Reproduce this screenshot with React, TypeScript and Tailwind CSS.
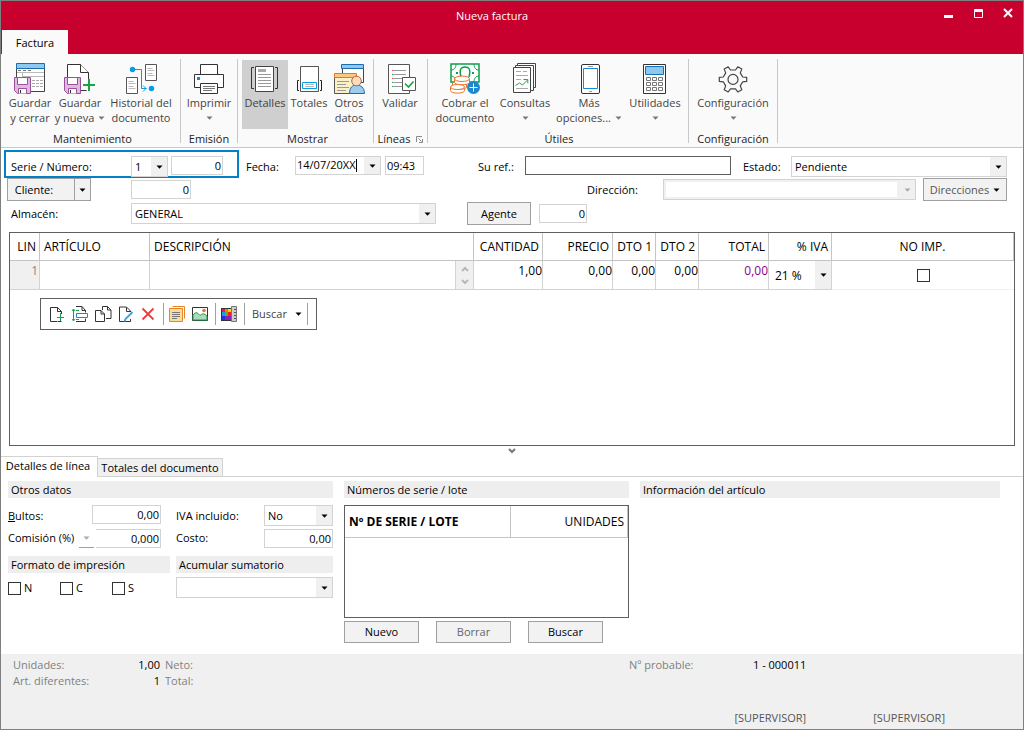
import React from "react";

type Kids = { children?: React.ReactNode };

function Icon({ children }: Kids) {
  return (
    <svg className="h-8 w-8 shrink-0" viewBox="0 0 32 32" fill="none" aria-hidden="true">
      {children}
    </svg>
  );
}

function Floppy() {
  return (
    <g stroke="#9c4f9c">
      <path d="M0.5 15.5h16v16h-13l-3-3z" fill="#dfbadf" />
      <path d="M3.5 15.5h10v7h-10z" fill="#fff" />
      <path d="M4.5 31.5v-5h8v5" fill="#fff" />
      <path d="M6.5 28v3" stroke="#333" />
    </g>
  );
}

function SaveCloseIcon() {
  return (
    <Icon>
      <path d="M2.5 6.5h28v23h-28z" fill="#fff" stroke="#444" />
      <path d="M2.5 1.5h28v5h-28z" fill="#8cc8f0" stroke="#1c6dae" />
      <path d="M4 8.5h3M9 8.5h3M14 8.5h3" stroke="#777" />
      <path d="M3 10.5h27M8.5 11v4M8 14.5h22" stroke="#bbb" />
      <path d="M18 18.5h11M18 21.5h11M18 24.5h11" stroke="#aaa" strokeDasharray="3 1" />
      <Floppy />
    </Icon>
  );
}

function SaveNewIcon() {
  return (
    <Icon>
      <path d="M3.5 15V2.5h13l8 8v18h-8" fill="#fff" stroke="#333" />
      <path d="M16.5 2.5v8h8" fill="#fff" stroke="#333" />
      <Floppy />
      <path d="M25 18v12M19 24h12" stroke="#fafafa" strokeWidth="5" />
      <path d="M25 17v12M19 23h12" stroke="#16a34a" strokeWidth="2" />
    </Icon>
  );
}

function HistoryIcon() {
  return (
    <Icon>
      <path d="M20.5 2.5h11v16h-11zM1.5 15.5h11v16h-11z" fill="#fff" stroke="#555" />
      <path d="M22.5 6.5h5M22.5 8.5h7M22.5 11.5h5M22.5 13.5h7M3.5 19.5h5M3.5 21.5h7M3.5 24.5h5M3.5 26.5h7" stroke="#bbb" />
      <path d="M7 7.5h9.5v19h5M18 23.5l3 3-3 3" stroke="#0a9be3" />
      <circle cx="7.5" cy="7.5" r="2.7" fill="#0a9be3" />
      <circle cx="26.5" cy="26.5" r="2.7" fill="#0a9be3" />
    </Icon>
  );
}

function PrintIcon() {
  return (
    <Icon>
      <path d="M7.5 12.5v-10h17v10" fill="#fff" stroke="#333" />
      <path d="M1.5 12.5h29v13h-29z" fill="#fff" stroke="#333" />
      <path d="M7.5 21.5h17v10h-17z" fill="#fff" stroke="#333" />
      <path d="M4 15h3v3H4z" fill="#1e88cf" />
      <path d="M10 24.5h12M10 26.5h12M10 28.5h9" stroke="#777" />
    </Icon>
  );
}

function DetailsIcon() {
  return (
    <Icon>
      <path d="M6.5 4.5h18v25h-18z" fill="#fff" stroke="#444" />
      <path d="M5 5.500H2.500v21H5M26 5.500h2.500v21H26" stroke="#333" />
      <path d="M9 7h8v3H9z" fill="#aaa" />
      <path d="M9 12.5h13M9 15.5h13M9 18.5h13M9 21.5h13M9 24.5h13" stroke="#999" />
    </Icon>
  );
}

function TotalsIcon() {
  return (
    <Icon>
      <path d="M7.5 4.5h18v25h-18z" fill="#fff" stroke="#555" />
      <path d="M6 18.5H4.5v10H6M27 18.5h1.500v10H27" stroke="#222" />
      <path d="M9.500 20.500h14v6h-14z" fill="#fff" stroke="#0a9be3" />
      <path d="M12 22.5h9M12 24.5h9" stroke="#bbb" />
    </Icon>
  );
}

function OtherDataIcon() {
  return (
    <Icon>
      <path d="M9.5 6.5h21v14h-21z" fill="#fff" stroke="#444" />
      <path d="M8.5 2.5h22v4h-22z" fill="#8cc8f0" stroke="#1c6dae" />
      <path d="M1.5 15.5h22v16h-22z" fill="#fbf0c8" stroke="#555" />
      <path d="M1.5 11.5h22v4h-22z" fill="#f9c883" stroke="#e8752a" />
      <path d="M4 19.5h12M4 22.5h9M4 25.5h12M4 28.5h9" stroke="#999" />
      <path d="M16.5 31.5c0-6 3-8.5 7-8.5s8 2.5 8 8.5z" fill="#9dccee" stroke="#1c6dae" />
      <circle cx="23.5" cy="19" r="4.8" fill="#fbdcc0" stroke="#b5643a" />
    </Icon>
  );
}

function ValidateIcon() {
  return (
    <Icon>
      <path d="M4.5 2.5h21v29h-21z" fill="#fff" stroke="#555" />
      <path d="M10 8.5h12M10 12.5h12M10 16.5h8M10 20.5h8M10 24.5h8" stroke="#999" />
      <path d="M8 8h1.500v1H8zM8 16h1.500v1H8z" fill="#e23b3b" />
      <path d="M8 12h1.500v1H8zM8 20h1.500v1H8zM8 24h1.500v1H8z" fill="#16a34a" />
      <path d="M18.5 15.5h13v13h-13z" fill="#fff" stroke="#555" />
      <path d="M21 21.5l3.500 3.500 5-5.500" stroke="#16a34a" strokeWidth="1.600" />
    </Icon>
  );
}

function CashIcon() {
  return (
    <Icon>
      <path d="M2 2h28v18H2z" fill="#fff" stroke="#0f9d4c" strokeWidth="1.500" />
      <path d="M2 8c3 0 5-2 5-6M30 8c-3 0-5-2-5-6M2 14c3 0 4 2 5 6M25 20c0-4 2-6 5-6" stroke="#0f9d4c" />
      <path d="M12 15c-2-8 0-10 4-10s6 2 4 10" stroke="#0f9d4c" strokeWidth="1.500" />
      <path d="M7 10h2v2H7zM23 10h2v2h-2z" fill="#0f9d4c" />
      <g fill="#fff" stroke="#e8752a">
        <path d="M1.500 25v3.500c0 3.500 14 3.500 14 0V25" />
        <path d="M3.500 21v4c0 3 14 3 14 0v-4" />
        <ellipse cx="8.500" cy="25" rx="7" ry="2.500" />
        <path d="M5.500 17v3.500c0 3 15 3 15 0V17" />
        <ellipse cx="13" cy="16.800" rx="7.500" ry="2.700" />
      </g>
      <circle cx="24.500" cy="25.500" r="6.500" fill="#1e88cf" />
      <path d="M24.500 21.500v8M20.500 25.500h8" stroke="#fff" />
    </Icon>
  );
}

function ReportsIcon() {
  return (
    <Icon>
      <path d="M8.5 1.5h18v24h-18z" fill="#fff" stroke="#444" />
      <path d="M6.5 3.5h18v25h-18z" fill="#fff" stroke="#444" />
      <path d="M4.5 5.5h17v25h-17z" fill="#fff" stroke="#444" />
      <path d="M7 9.5h5M14 9.5h4M7 13.5h12M7 17.5h5M14 17.5h3M7 26.5h12" stroke="#aaa" />
      <path d="M6.500 23.500l4-2.500 3 2 5-5M15 17.500h3.800v3.800" stroke="#2da14f" />
    </Icon>
  );
}

function PhoneIcon() {
  return (
    <Icon>
      <rect x="8.5" y="2.5" width="18" height="29" rx="1.5" fill="#fff" stroke="#333" />
      <path d="M10.5 6.5h14v20h-14z" fill="#fff" stroke="#1e88cf" />
      <path d="M15 4.5h5M16 29.5h3" stroke="#999" />
    </Icon>
  );
}

function CalculatorIcon() {
  return (
    <Icon>
      <path d="M4.5 2.5h22v29h-22z" fill="#fff" stroke="#333" />
      <path d="M6.5 4.5h18v8h-18z" fill="#8cc8f0" stroke="#1c6dae" />
      <path
        d="M7.5 15.5h4v3h-4zM13.5 15.5h4v3h-4zM19.5 15.5h4v3h-4zM7.5 20.5h4v3h-4zM13.5 20.5h4v3h-4zM19.5 20.5h4v3h-4zM7.5 25.5h4v3h-4zM13.5 25.5h4v3h-4zM19.5 25.5h4v3h-4z"
        stroke="#777"
      />
    </Icon>
  );
}

function GearIcon() {
  return (
    <Icon>
      <path
        d="M13.500 8l-2.300-3.200-4 2.300 1.500 3.800-2.400 4.100-4 .4v4l4 .4 2.400 4.100-1.500 3.800 4 2.300 2.300-3.200h5l2.300 3.200 4-2.300-1.500-3.800 2.400-4.100 4-.4v-4l-4-.4-2.400-4.100 1.500-3.800-4-2.300L18.500 8z"
        stroke="#444"
        strokeWidth="1.200"
        strokeLinejoin="round"
      />
      <circle cx="16" cy="17.400" r="5" stroke="#444" strokeWidth="1.200" />
    </Icon>
  );
}

function Arrow({ className = "text-black" }: { className?: string }) {
  return (
    <svg className={"h-1 w-[7px] shrink-0 " + className} viewBox="0 0 7 4" aria-hidden="true">
      <path d="M0.500 0.500h6L3.500 3.800z" fill="currentColor" />
    </svg>
  );
}

type RibbonButtonProps = {
  icon: React.ReactNode;
  lines: string[];
  menu?: boolean;
  pressed?: boolean;
  className?: string;
};

function RibbonButton({ icon, lines, menu, pressed, className = "" }: RibbonButtonProps) {
  return (
    <button
      type="button"
      aria-pressed={pressed}
      className={
        "flex h-[69px] flex-col items-center whitespace-nowrap pt-0.5 leading-[15px] text-[#444] " +
        (pressed ? "bg-[#cfcfcf] " : "") +
        className
      }
    >
      {icon}
      <span className="mt-px">{lines[0]}</span>
      <span className="flex h-[15px] items-center gap-1">
        {lines[1]}
        {menu && <Arrow className="text-[#777]" />}
      </span>
    </button>
  );
}

function RibbonGroup({ title, launcher, className = "", children }: Kids & { title: string; launcher?: boolean; className?: string }) {
  return (
    <section className={"flex flex-col justify-between border-r border-[#c8c8c8] " + className}>
      <div className="flex pt-px">{children}</div>
      <div className="flex h-[7px] items-center justify-center gap-[6px] text-[#222]">
        {title}
        {launcher && (
          <svg className="h-[7px] w-[7px]" viewBox="0 0 7 7" fill="none" stroke="#888" aria-hidden="true">
            <path d="M0.500 6V0.500H6M2.500 2.500l3 3M6.500 3v3.500H3" />
          </svg>
        )}
      </div>
    </section>
  );
}

type PickProps = {
  label: string;
  value: string;
  className?: string;
  arrow?: string;
  disabled?: boolean;
};

function Pick({ label, value, className = "", arrow = "w-4", disabled }: PickProps) {
  return (
    <span className={"relative flex border border-[#d3d3d3] " + (disabled ? "bg-[#f0f0f0] p-0.5 " : "bg-white ") + className}>
      <select
        aria-label={label}
        disabled={disabled}
        defaultValue={value}
        className={"w-full min-w-0 appearance-none bg-white outline-none " + (disabled ? "mr-4" : "pl-[3px] pt-px")}
      >
        <option>{value}</option>
      </select>
      <span className={"pointer-events-none absolute inset-y-0 right-0 flex items-center justify-center bg-[#f0f0f0] " + arrow}>
        <Arrow className={disabled ? "text-[#aaa]" : "text-black"} />
      </span>
    </span>
  );
}

function Field({ label, value = "", className = "" }: { label: string; value?: string; className?: string }) {
  return (
    <input
      aria-label={label}
      defaultValue={value}
      className={"h-[19px] min-w-0 border border-[#d3d3d3] bg-white pb-px outline-none " + className}
    />
  );
}

function PushButton({ children, className = "" }: Kids & { className?: string }) {
  return (
    <button
      type="button"
      className={"flex items-center justify-center border border-[#a0a0a0] bg-[#f2f2f2] pt-px " + className}
    >
      {children}
    </button>
  );
}

function SectionTitle({ children, className = "" }: Kids & { className?: string }) {
  return <h2 className={"h-[17px] bg-[#eee] pl-[3px] leading-[17px] " + className}>{children}</h2>;
}

function Check({ label, text }: { label: string; text?: string }) {
  return (
    <label className="flex items-center gap-[3px]">
      <input
        type="checkbox"
        aria-label={label}
        className="h-[13px] w-[13px] appearance-none border border-[#333] bg-white checked:bg-[#333]"
      />
      {text}
    </label>
  );
}

function Tool({ label, children }: Kids & { label: string }) {
  return (
    <button type="button" aria-label={label} className="h-[18px] w-4">
      <svg className="h-[18px] w-[18px] max-w-none" viewBox="0 0 18 18" fill="none" aria-hidden="true">
        {children}
      </svg>
    </button>
  );
}

function Divider({ className = "" }: { className?: string }) {
  return <span className={"h-[22px] w-px bg-[#a0a0a0] " + className} />;
}

function LineToolbar() {
  return (
    <div role="toolbar" aria-label="Línea" className="ml-[30px] mt-2 flex h-8 w-fit items-center border border-[#5f5f5f] bg-white px-2">
      <div className="flex gap-[7px]">
        <Tool label="Nueva línea">
          <path d="M12.500 9V6.500l-4-4h-7v14h7M8.500 2.500v4h4M9 16.500h3.500" stroke="#333" />
          <path d="M11.500 8v8M8 12.500h7" stroke="#16a34a" />
        </Tool>
        <Tool label="Insertar línea">
          <path d="M4 1.500h6l3.500 4v2M10 1.500v4h3.500M4 16.500h9.500v-3" stroke="#333" />
          <path d="M1.500 4.500v11M0 6l1.500-2L3 6M0 14l1.500 2L3 14M4 5.500h3M4 14.500h3" stroke="#16a34a" />
          <path d="M4.500 8.500h11v4h-11z" fill="#fff" stroke="#1e88cf" />
        </Tool>
        <Tool label="Duplicar línea">
          <path d="M7.500 5V1.500h5l3.500 3.500v8.500h-5M12.500 1.500V5H16" stroke="#333" />
          <path d="M0.500 5.500h5.500L9.500 9v7.500h-9zM6 5.500V9h3.500" fill="#fff" stroke="#333" />
        </Tool>
        <Tool label="Modificar línea">
          <path d="M12.500 7V6l-4-4h-7v14.500h11V14M8.500 2.500v4h4" stroke="#333" />
          <path d="M14.500 7L7.500 14l-1 2.500" stroke="#4ba0dc" strokeWidth="2" />
        </Tool>
        <Tool label="Eliminar línea">
          <path d="M1.500 3.500l11 11M12.500 3.500l-11 11" stroke="#ee3b3b" strokeWidth="1.800" />
        </Tool>
      </div>
      <Divider className="ml-[6px] mr-[5px]" />
      <div className="flex gap-[7px]">
        <Tool label="Notas">
          <path d="M3.500 1.500h12v12" stroke="#e8852a" />
          <path d="M0.500 3.500h13v13H0.500z" fill="#fbdc98" stroke="#e8852a" />
          <path d="M3 7.500h8M3 9.500h8M3 11.500h8M3 13.500h5" stroke="#777" />
        </Tool>
        <Tool label="Imagen">
          <path d="M0.500 2.500h15v13H0.500z" fill="#fff" stroke="#333" />
          <path d="M1 10c3-4 5-2 7 .5 2-2 4-2.500 7 .5v4H1z" fill="#a9dcb8" stroke="#1f9a50" />
          <circle cx="12" cy="5.500" r="1.800" fill="#e8752a" />
        </Tool>
      </div>
      <Divider className="ml-[7px] mr-[5px]" />
      <Tool label="Tallas y colores">
        <path d="M0 3h11v13H0z" fill="#333" />
        <path d="M1 4h3v3H1z" fill="#e22" />
        <path d="M4 4h3v3H4z" fill="#f57c00" />
        <path d="M7 4h3v3H7z" fill="#ffd600" />
        <path d="M1 7h3v4H1z" fill="#1e9be8" />
        <path d="M4 7h3v4H4z" fill="#5ab52c" />
        <path d="M7 7h3v4H7z" fill="#e22" />
        <path d="M1 11h3v4H1z" fill="#2433d8" />
        <path d="M4 11h6v4H4z" fill="#8e1fb8" />
        <path d="M10.500 1.500h5v15h-5z" fill="#ccc" stroke="#777" />
        <path d="M13 4.500h2M13 7.500h2M13 10.500h2M13 13.500h2" stroke="#555" />
      </Tool>
      <Divider className="mx-[7px]" />
      <button type="button" className="flex items-center gap-2 text-[#444]">
        Buscar
        <Arrow />
      </button>
      <Divider className="ml-[5px]" />
    </div>
  );
}

const lineColumns = [
  { name: "LIN", width: "w-[30px]", align: "text-right pr-[3px]" },
  { name: "ARTÍCULO", width: "w-[110px]", align: "text-left pl-1" },
  { name: "DESCRIPCIÓN", width: "", align: "text-left pl-1" },
  { name: "CANTIDAD", width: "w-[69px]", align: "text-right pr-[3px]" },
  { name: "PRECIO", width: "w-[70px]", align: "text-right pr-[3px]" },
  { name: "DTO 1", width: "w-[43px]", align: "text-right pr-[3px]" },
  { name: "DTO 2", width: "w-[43px]", align: "text-right pr-[3px]" },
  { name: "TOTAL", width: "w-[70px]", align: "text-right pr-[3px]" },
  { name: "% IVA", width: "w-[63px]", align: "text-right pr-[3px]" },
  { name: "NO IMP.", width: "w-[182px]", align: "text-center" },
];

const amounts = [
  { name: "Cantidad", value: "1,00", color: "" },
  { name: "Precio", value: "0,00", color: "" },
  { name: "Descuento 1", value: "0,00", color: "" },
  { name: "Descuento 2", value: "0,00", color: "" },
  { name: "Total", value: "0,00", color: "text-[#8b008b]" },
];

function LinesTable() {
  return (
    <table className="w-full table-fixed border-separate border-spacing-0 text-[12px]">
      <thead>
        <tr className="h-[28px]">
          {lineColumns.map((c) => (
            <th key={c.name} className={"border-b border-r border-[#c4c4c4] p-0 font-normal " + c.width + " " + c.align}>
              {c.name}
            </th>
          ))}
        </tr>
      </thead>
      <tbody>
        <tr className="h-[29px]">
          <td className="border-b border-r border-[#d3d3d3] bg-[#f0f0f0] p-0 pr-px pt-0.5 text-right align-top leading-4 text-[#888]">1</td>
          <td className="border-b border-r border-[#d3d3d3] p-0">
            <input aria-label="Artículo" className="block h-[26px] w-full px-1 outline-none" />
          </td>
          <td className="border-b border-r border-[#d3d3d3] p-0">
            <div className="flex">
              <input aria-label="Descripción" className="block h-[26px] min-w-0 flex-1 px-1 outline-none" />
              <span className="flex h-[28px] w-[18px] items-center justify-center border-l border-[#d3d3d3] bg-[#f0f0f0]">
                <svg className="h-[20px] w-2" viewBox="0 0 8 20" fill="none" stroke="#b8b8b8" strokeWidth="2" aria-hidden="true">
                  <path d="M1 6l3-3 3 3M1 15l3 3 3-3" />
                </svg>
              </span>
            </div>
          </td>
          {amounts.map((a) => (
            <td key={a.name} className="border-b border-r border-[#d3d3d3] p-0 align-top">
              <input
                aria-label={a.name}
                defaultValue={a.value}
                className={"block h-5 w-full bg-white pb-px text-right outline-none " + a.color}
              />
            </td>
          ))}
          <td className="border-b border-r border-[#d3d3d3] p-0">
            <Pick label="% IVA" value="21 %" className="h-[28px] border-0 pl-[3px]" arrow="w-4" />
          </td>
          <td className="border-b border-[#f0f0f0] p-0">
            <div className="flex justify-center">
              <Check label="No imprimir" />
            </div>
          </td>
        </tr>
      </tbody>
    </table>
  );
}

function Ribbon() {
  return (
    <nav aria-label="Cinta" className="flex h-[94px] border-b border-[#c8c8c8] bg-[#fafafa] pb-1 pt-[5px]">
      <RibbonGroup title="Mantenimiento" className="w-[180px] pl-1">
        <RibbonButton icon={<SaveCloseIcon />} lines={["Guardar", "y cerrar"]} className="w-[50px]" />
        <RibbonButton icon={<SaveNewIcon />} lines={["Guardar", "y nueva"]} menu className="w-[50px]" />
        <RibbonButton icon={<HistoryIcon />} lines={["Historial del", "documento"]} className="w-[72px]" />
      </RibbonGroup>
      <RibbonGroup title="Emisión" className="w-[57px]">
        <RibbonButton icon={<PrintIcon />} lines={["Imprimir"]} menu className="w-14" />
      </RibbonGroup>
      <RibbonGroup title="Mostrar" className="w-[136px] pl-1">
        <RibbonButton icon={<DetailsIcon />} lines={["Detalles"]} pressed className="w-[46px]" />
        <RibbonButton icon={<TotalsIcon />} lines={["Totales"]} className="w-[42px]" />
        <RibbonButton icon={<OtherDataIcon />} lines={["Otros", "datos"]} className="w-[38px]" />
      </RibbonGroup>
      <RibbonGroup title="Líneas" launcher className="w-[54px]">
        <RibbonButton icon={<ValidateIcon />} lines={["Validar"]} className="w-[52px]" />
      </RibbonGroup>
      <RibbonGroup title="Útiles" className="w-[261px] pl-0.5">
        <RibbonButton icon={<CashIcon />} lines={["Cobrar el", "documento"]} className="w-[70px]" />
        <RibbonButton icon={<ReportsIcon />} lines={["Consultas"]} menu className="w-[50px]" />
        <RibbonButton icon={<PhoneIcon />} lines={["Más", "opciones..."]} menu className="w-[78px]" />
        <RibbonButton icon={<CalculatorIcon />} lines={["Utilidades"]} menu className="w-[54px]" />
      </RibbonGroup>
      <RibbonGroup title="Configuración" className="w-[89px]">
        <RibbonButton icon={<GearIcon />} lines={["Configuración"]} menu className="w-[88px]" />
      </RibbonGroup>
    </nav>
  );
}

function HeaderForm() {
  return (
    <div className="pl-[3px] pr-4 pt-0.5">
      <div className="flex items-start">
        <div className="flex h-7 w-[235px] items-start border-2 border-[#0082c8] pl-[5px] pt-1">
          <span className="w-[120px] leading-[22px]">Serie / Número:</span>
          <Pick label="Serie" value="1" className="h-[21px] w-[37px]" />
          <Field label="Número" value="0" className="ml-[3px] w-[52px] pr-px text-right" />
        </div>
        <label className="ml-[7px] flex pt-[6px]">
          <span className="w-[49px] leading-[22px]">Fecha:</span>
          <span className="relative flex h-[19px] w-[86px] border border-[#d3d3d3]">
            <input defaultValue="14/07/20XX" className="w-[68px] pb-px pl-px outline-none" />
            <span className="absolute left-[60px] top-0.5 h-[13px] w-px bg-black" />
            <span className="flex flex-1 items-center justify-center bg-[#f0f0f0]">
              <Arrow />
            </span>
          </span>
        </label>
        <Field label="Hora" value="09:43" className="ml-1 mt-[6px] w-[39px] pl-px" />
        <label className="ml-[54px] flex min-w-0 flex-1 pt-[6px]">
          <span className="w-[47px] leading-[22px]">Su ref.:</span>
          <input className="h-[19px] min-w-0 flex-1 border border-[#5f5f5f] outline-none" />
        </label>
        <span className="ml-3 mt-[6px] w-12 leading-[22px]">Estado:</span>
        <Pick label="Estado" value="Pendiente" className="mt-[6px] h-[21px] w-[216px]" />
      </div>
      <div className="flex items-center pl-[3px]">
        <PushButton className="h-[23px] w-[68px] pr-[14px]">Cliente:</PushButton>
        <PushButton className="-ml-px h-[23px] w-[17px]">
          <Arrow />
        </PushButton>
        <Field label="Cliente" value="0" className="ml-10 w-[60px] pr-px text-right" />
        <span className="ml-auto w-[76px] pt-0.5">Dirección:</span>
        <Pick label="Dirección" value="" disabled className="h-[21px] w-[253px]" />
        <PushButton className="ml-[7px] h-[23px] w-[84px] gap-1 text-[#555]">
          Direcciones
          <Arrow />
        </PushButton>
      </div>
      <div className="mt-px flex items-center pl-[7px]">
        <span className="w-[120px] pt-0.5">Almacén:</span>
        <Pick label="Almacén" value="GENERAL" className="h-[21px] w-[305px]" />
        <PushButton className="ml-[31px] h-[23px] w-16">Agente</PushButton>
        <Field label="Agente" value="0" className="ml-2 w-12 pr-px text-right" />
      </div>
    </div>
  );
}

function LineDetails() {
  return (
    <div className="flex gap-[11px] px-[7px] pt-1">
      <div className="w-[325px]">
        <SectionTitle>Otros datos</SectionTitle>
        <div className="mt-[7px] flex">
          <label className="flex h-6 w-[168px]">
            <span className="w-[84px] leading-[22px]">
              <u>B</u>ultos:
            </span>
            <input defaultValue="0,00" className="h-[19px] w-[69px] border border-[#d3d3d3] pb-px pr-px text-right outline-none" />
          </label>
          <span className="w-[88px] leading-[22px]">IVA incluido:</span>
          <Pick label="IVA incluido" value="No" className="h-[21px] w-[69px]" />
        </div>
        <div className="flex">
          <div className="flex w-[168px]">
            <span className="w-[71px] leading-[18px]">Comisión (%)</span>
            <button type="button" aria-label="Tipo de comisión" className="mr-0.5 flex h-[19px] w-[15px] items-center justify-center border-b border-[#a0a0a0]">
              <Arrow className="text-[#aaa]" />
            </button>
            <Field label="Comisión" value="0,000" className="w-[65px] border-l-0 pr-px text-right" />
          </div>
          <label className="flex">
            <span className="w-[88px] leading-[18px]">Costo:</span>
            <input defaultValue="0,00" className="h-[19px] w-[69px] border border-[#d3d3d3] pb-px pr-px text-right outline-none" />
          </label>
        </div>
        <div className="mt-2 flex gap-[6px]">
          <div className="w-[162px]">
            <SectionTitle>Formato de impresión</SectionTitle>
            <div className="mt-[7px] grid h-[15px] grid-cols-[52px_52px_52px] items-center">
              <Check label="N" text="N" />
              <Check label="C" text="C" />
              <Check label="S" text="S" />
            </div>
          </div>
          <div className="w-[157px]">
            <SectionTitle>Acumular sumatorio</SectionTitle>
            <Pick label="Acumular sumatorio" value="" className="mt-1 h-[21px]" />
          </div>
        </div>
      </div>
      <div className="w-[285px]">
        <SectionTitle>Números de serie / lote</SectionTitle>
        <div className="mt-[7px] h-[113px] border border-[#5f5f5f]">
          <table className="w-full border-separate border-spacing-0 text-[12px]">
            <thead>
              <tr className="h-8">
                <th className="w-[166px] border-b border-r border-[#c4c4c4] p-0 pl-1 text-left font-bold">Nº DE SERIE / LOTE</th>
                <th className="border-b border-r border-[#c4c4c4] p-0 pr-[3px] text-right font-normal">UNIDADES</th>
              </tr>
            </thead>
          </table>
        </div>
        <div className="mt-[3px] flex gap-[17px]">
          <PushButton className="h-[22px] w-[75px]">Nuevo</PushButton>
          <PushButton className="h-[22px] w-[75px] text-[#666]">Borrar</PushButton>
          <PushButton className="h-[22px] w-[75px]">Buscar</PushButton>
        </div>
      </div>
      <div className="mr-4 flex-1">
        <SectionTitle>Información del artículo</SectionTitle>
      </div>
    </div>
  );
}

function StatusBar() {
  return (
    <footer className="mt-[11px] flex h-[75px] flex-col justify-between bg-[#f0f0f0] pb-[3px] pl-3 pt-[3px] leading-4 text-[#808080]">
      <div className="flex">
        <dl className="grid w-[616px] grid-cols-[90px_57px_1fr] gap-x-0">
          <dt>Unidades:</dt>
          <dd className="text-right text-black">1,00</dd>
          <dd className="pl-[5px]">Neto:</dd>
          <dt>Art. diferentes:</dt>
          <dd className="text-right text-black">1</dd>
          <dd className="pl-[5px]">Total:</dd>
        </dl>
        <span className="w-[124px]">Nº probable:</span>
        <span className="text-black">1 - 000011</span>
      </div>
      <div className="flex justify-end gap-[67px] pr-[78px] text-[#555]">
        <span>[SUPERVISOR]</span>
        <span>[SUPERVISOR]</span>
      </div>
    </footer>
  );
}

export default function App() {
  return (
    <div className="flex min-h-screen flex-col border border-[#7f7f7f] bg-white font-['Open_Sans','Noto_Sans',sans-serif] text-[11px] text-black">
      <header className="flex h-[53px] flex-col justify-between bg-[#c8002d] text-white">
        <div className="grid grid-cols-[1fr_auto_1fr] pt-[6px]">
          <h1 className="col-start-2 mr-10 leading-[18px]">Nueva factura</h1>
          <div className="flex items-start justify-end gap-5 pr-[10px]">
            <button type="button" aria-label="Minimizar" className="flex h-[11px] w-[10px] items-end">
              <svg className="h-[3px] w-[9px]" viewBox="0 0 9 3"><path d="M0 0h9v3H0z" fill="#fff" /></svg>
            </button>
            <button type="button" aria-label="Maximizar" className="flex h-[11px] w-[9px] items-end">
              <svg className="h-[9px] w-[9px]" viewBox="0 0 9 9" fill="none" stroke="#fff"><path d="M0.500 0.500h8v8h-8zM0 1.500h9M0 2.500h9" /></svg>
            </button>
            <button type="button" aria-label="Cerrar" className="flex h-[11px] w-[10px] items-end">
              <svg className="h-[10px] w-[10px]" viewBox="0 0 10 10" fill="none" stroke="#fff" strokeWidth="2"><path d="M1 1l8 8M9 1l-8 8" /></svg>
            </button>
          </div>
        </div>
        <button type="button" className="ml-px h-6 w-[66px] bg-[#fafafa] pt-0.5 text-black">Factura</button>
      </header>
      <Ribbon />
      <main className="flex flex-1 flex-col">
        <HeaderForm />
        <div className="mx-2 mt-[7px] min-h-[120px] flex-1 border border-[#5f5f5f]">
          <LinesTable />
          <LineToolbar />
        </div>
        <div className="flex h-[10px] items-center justify-center">
          <svg className="h-[6px] w-2" viewBox="0 0 8 6" fill="none" stroke="#777" strokeWidth="2" aria-hidden="true">
            <path d="M1 1l3 3 3-3" />
          </svg>
        </div>
        <div role="tablist" className="flex h-[21px] items-end border-b border-[#d3d3d3]">
          <button type="button" role="tab" aria-selected="true" className="-mb-px h-[21px] w-[97px] border-r border-t border-[#d3d3d3] bg-white pb-0.5 pr-0.5">
            Detalles de línea
          </button>
          <button type="button" role="tab" aria-selected="false" className="h-[18px] w-[125px] whitespace-nowrap border-r border-t border-[#d3d3d3] bg-[#f0f0f0] pt-px">
            Totales del documento
          </button>
        </div>
        <LineDetails />
        <StatusBar />
      </main>
    </div>
  );
}
